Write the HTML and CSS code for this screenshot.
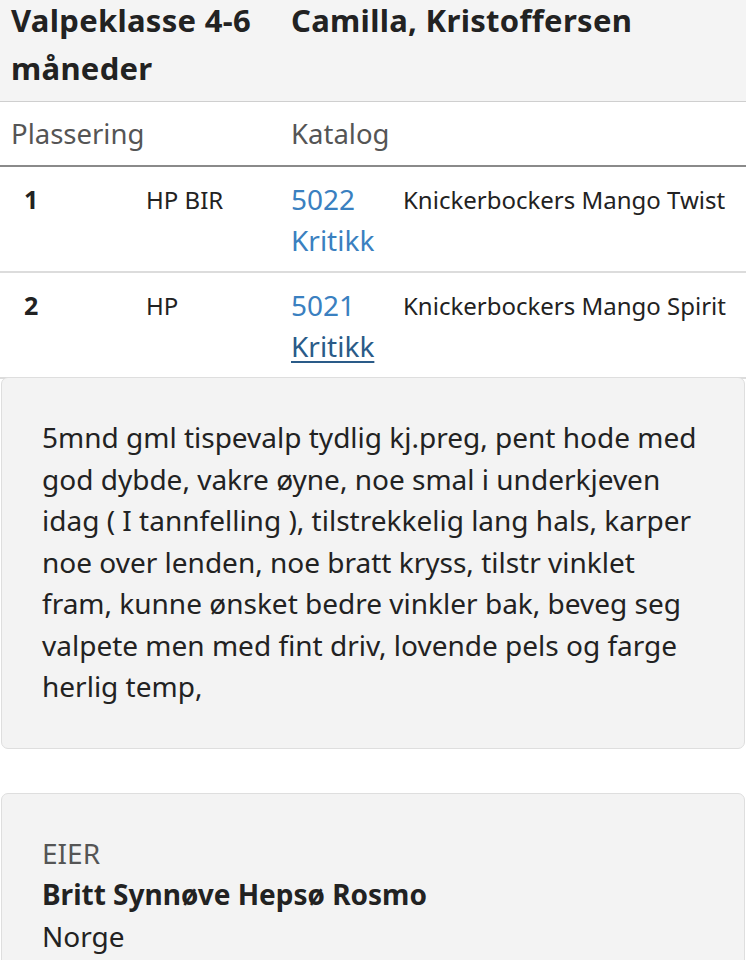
FILE: index.html
```html
<!DOCTYPE html>
<html lang="no">
<head>
<meta charset="utf-8">
<link rel="stylesheet" href="styles.css">
</head>
<body>
<div class="page">
  <div class="class-head">
    <div class="class-name">Valpeklasse 4-6 måneder</div>
    <div class="judge">Camilla, Kristoffersen</div>
  </div>
  <table class="results">
    <thead>
      <tr>
        <th colspan="2" class="th-place">Plassering</th>
        <th colspan="2" class="th-cat">Katalog</th>
      </tr>
    </thead>
    <tbody>
      <tr>
        <td class="c-num">1</td>
        <td class="c-award">HP BIR</td>
        <td class="c-cat"><a class="link" href="#">5022</a><br><a class="link" href="#">Kritikk</a></td>
        <td class="c-name">Knickerbockers Mango Twist</td>
      </tr>
      <tr>
        <td class="c-num">2</td>
        <td class="c-award">HP</td>
        <td class="c-cat"><a class="link" href="#">5021</a><br><a class="link active" href="#">Kritikk</a></td>
        <td class="c-name">Knickerbockers Mango Spirit</td>
      </tr>
    </tbody>
  </table>
  <div class="card critique">
    5mnd gml tispevalp tydlig kj.preg, pent hode med god dybde, vakre øyne, noe smal i underkjeven idag ( I tannfelling ), tilstrekkelig lang hals, karper noe over lenden, noe bratt kryss, tilstr vinklet fram, kunne ønsket bedre vinkler bak, beveg seg valpete men med fint driv, lovende pels og farge herlig temp,
  </div>
  <div class="card owner">
    <div class="label">EIER</div>
    <div class="owner-name">Britt Synnøve Hepsø Rosmo</div>
    <div class="country">Norge</div>
  </div>
</div>
</body>
</html>
```
FILE: styles.css
```css
* { box-sizing: border-box; }
html, body { margin: 0; padding: 0; background: #fff; }
body {
  font-family: "Noto Sans", Roboto, sans-serif;
  color: #222;
  font-size: 25px;
}
.page { width: 746px; overflow: hidden; }
.class-head {
  display: grid;
  grid-template-columns: 280px 1fr;
  align-items: start;
  padding: 0 11px;
  height: 102px;
  background: #f4f4f4;
  border-bottom: 1px solid #cfcfcf;
  font-weight: 700;
  font-size: 31px;
  letter-spacing: 0.3px;
  line-height: 48px;
}
.class-name, .judge { margin-top: -4px; }
.class-name { width: 268px; }
.results {
  width: 100%;
  border-collapse: collapse;
}
.results th {
  text-align: left;
  font-weight: 400;
  font-size: 27.5px;
  color: #555;
  height: 64px;
  padding: 0;
  border-bottom: 2px solid #8a8a8a;
  vertical-align: middle;
}
.th-place { padding-left: 11px !important; }
.results td {
  vertical-align: top;
  line-height: 41px;
  padding: 12px 0 10px 0;
  border-bottom: 2px solid #dcdcdc;
}
.c-num { width: 146px; padding-left: 24px !important; font-weight: 700; }
.c-award { width: 145px; font-size: 24px; }
.c-cat { width: 112px; font-size: 28px; }
.c-name { white-space: nowrap; font-size: 24px; }
.link { color: #3a80c0; text-decoration: none; }
.link.active { color: #2a5b88; text-decoration: underline; text-decoration-thickness: 2px; text-underline-offset: 4px; }
.card {
  background: #f3f3f3;
  border: 1px solid #dedede;
  border-radius: 7px;
  margin: 0 1px;
  font-size: 28px;
  line-height: 41.5px;
  padding: 39px 32px 40px 40px;
}
.critique { margin-top: -2px; }
.owner { margin-top: 44px; }
.label { color: #555; }
.owner-name { font-weight: 700; }
```
